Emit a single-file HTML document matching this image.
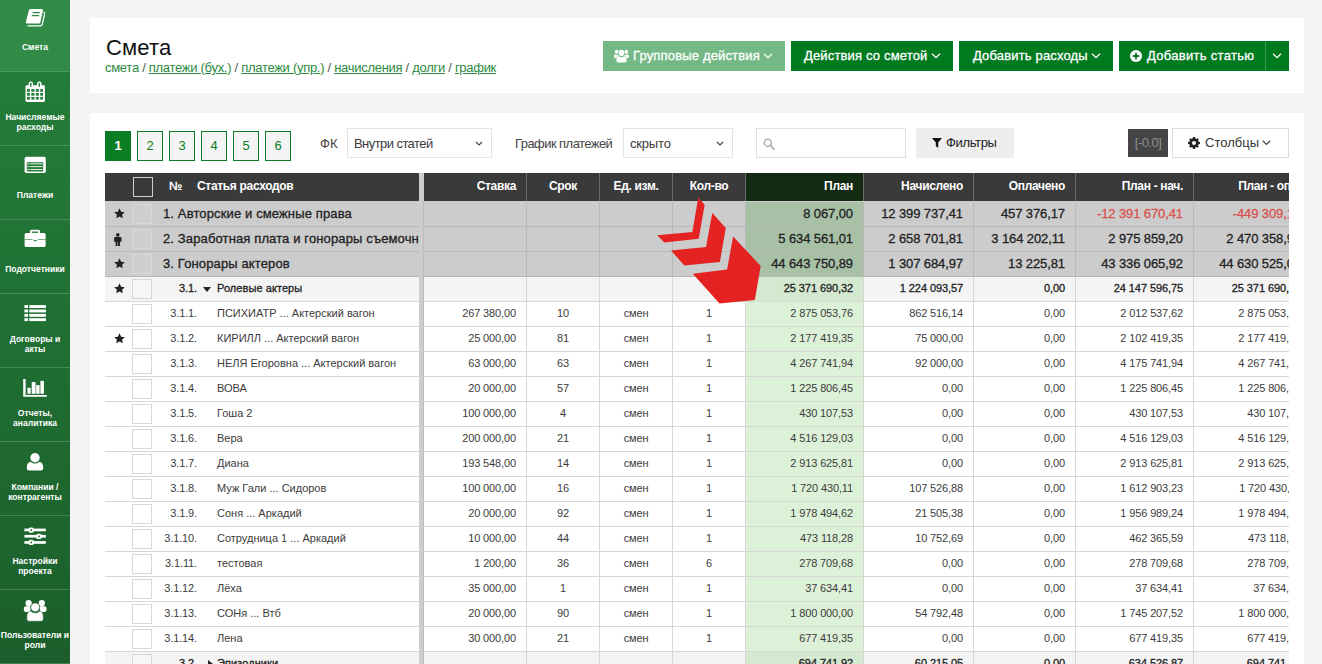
<!DOCTYPE html>
<html lang="ru"><head><meta charset="utf-8"><title>Смета</title>
<style>
*{box-sizing:border-box}
html,body{margin:0;padding:0}
body{width:1322px;height:664px;overflow:hidden;background:#f4f4f4;font-family:"Liberation Sans",sans-serif;color:#222;position:relative}
.abs{position:absolute}
/* sidebar */
#side{position:absolute;left:0;top:0;width:70px;height:664px;background:linear-gradient(#25803b,#1b5e2b);overflow:hidden}
.si{position:absolute;left:0;width:70px;height:74px;border-bottom:1px solid rgba(255,255,255,.18);color:#fff;text-align:center}
.si.act{background:#328a47;border-bottom-color:rgba(255,255,255,.13)}
.si svg{position:absolute;left:25px;top:9px;width:20px;height:20px;fill:#fff}
.si .t{position:absolute;left:-20px;width:110px;font-size:9.500px;line-height:9.500px;letter-spacing:0;white-space:nowrap;font-weight:bold;transform:scaleX(.9);transform-origin:55px 0}
/* header panel */
#head{position:absolute;left:90px;top:18px;width:1214px;height:75px;background:#fff}
#title{position:absolute;left:16px;top:17px;font-size:22px;letter-spacing:.15px;line-height:26px;color:#111;white-space:nowrap}
#crumbs{position:absolute;left:15px;top:42px;font-size:13px;line-height:16px;letter-spacing:-.29px;color:#2c8a40;white-space:nowrap}
#crumbs u{color:#2c8a40}
#crumbs i{font-style:normal;color:#555}
.btn{position:absolute;top:23px;height:30px;background:#007a1e;color:#fff;font-size:13px;line-height:30px;white-space:nowrap;letter-spacing:.16px;-webkit-text-stroke:.3px #fff}
.btn.dis{background:#74b985}
.btn span{position:absolute;top:0}
.btn svg{position:absolute}
/* main panel */
#main{position:absolute;left:90px;top:113px;width:1214px;height:560px;background:#fff}
.pg{position:absolute;top:18px;width:26px;height:30px;border:1px solid #0b7d24;background:#f4f4f4;color:#0b7d24;font-size:13px;line-height:28px;text-align:center}
.pg.on{background:#0b7d24;color:#fff;font-weight:bold}
.lbl{position:absolute;top:16px;height:30px;line-height:30px;font-size:13px;color:#444;white-space:nowrap}
.sel{position:absolute;top:15px;height:30px;border:1px solid #e2e4ea;background:#fff;font-size:13px;line-height:30px;color:#3a3a3a;padding-left:6px;white-space:nowrap}
.sel svg{position:absolute;right:8px;top:12px}
/* grid */
#lt{position:absolute;left:15px;top:60px;width:314px;height:500px;overflow:hidden;background:#ccc}
#sp{position:absolute;left:329px;top:60px;width:5px;height:500px;background:#cdcdcd;border-right:1px solid #bcbcbc}
#sph{position:absolute;left:329px;top:60px;width:5px;height:28px;background:#cecece}
#rt{position:absolute;left:334px;top:60px;width:865px;height:500px;overflow:hidden;background:#ccc}
.hr{position:absolute;left:0;top:0;height:28px;background:#3a3a3a;color:#fff;font-size:12px;font-weight:bold;line-height:27px;white-space:nowrap;letter-spacing:-.32px}
.r{position:absolute;left:0;height:25px;border-bottom:1px solid #d6d6d6;white-space:nowrap}
.r.g{background:#cccccc;border-bottom-color:#b9b9b9;font-size:13px;line-height:23px;color:#222;-webkit-text-stroke:.3px #222;letter-spacing:-.1px}
.r.g .nm{letter-spacing:.13px}
.r.s{background:#f4f4f4;font-size:11px;line-height:22px;color:#222;-webkit-text-stroke:.3px #222;letter-spacing:-.09px}
.r.s .nm{letter-spacing:.07px}
.r.i{background:#fff;font-size:11px;line-height:22px;color:#3c3c3c;letter-spacing:-.13px}
.r.i .nm{letter-spacing:0}
.c{position:absolute;top:0;height:100%;border-right:1px solid #d6d6d6;padding:0 10px;overflow:hidden}
.g .c{border-right-color:#b9b9b9}
.hr .c{border-right-color:#6a6a6a}
.ra{text-align:right}
.ca{text-align:center}
.red{color:#d9534f;-webkit-text-stroke-color:#d9534f}
.cb{position:absolute;left:27px;top:2px;width:20px;height:20px;border:1px solid #d8d8d8;background:#fff}
.g .cb{background:#cfcfcf;border-color:#d8d8d8}
.s .cb{background:#f6f6f6;border-color:#d6d6d6}
.ic{position:absolute;left:8.500px;top:6.300px;width:11px;height:11px}
.num{position:absolute;top:0;text-align:right}
.nm{position:absolute;top:0}
</style></head><body>
<div id="side">
<div class="si act" style="top:-2px">
<svg viewBox="0 0 20 20"><path d="M5.700 1.900H16.500a1.500 1.500 0 0 1 1.450 1.900L15.300 15.400a1.600 1.600 0 0 1-1.550 1.200H2.100a1.300 1.300 0 0 1-1.260-1.600L3.900 3.200A1.800 1.800 0 0 1 5.700 1.900z"/><path d="M19 5.400c.6.300.8.900.7 1.500L17.200 17.300a1.900 1.900 0 0 1-1.850 1.500H2.900" fill="none" stroke="#fff" stroke-width="1.300" stroke-linecap="round"/><path d="M7.700 5h7.300l-.3 1.300H7.400zM6.900 7.900h7.300l-.3 1.300H6.600z" fill="#328a47"/></svg>
<div class="t" style="top:44px">Смета</div>
</div>
<div class="si" style="top:72px">
<svg viewBox="0 0 20 20" style="overflow:visible"><path d="M1.700 4.200H18.700c.7 0 1.200.5 1.200 1.200V19.700c0 .7-.5 1.200-1.200 1.200H1.700c-.7 0-1.200-.5-1.200-1.200V5.400c0-.7.500-1.200 1.200-1.200z"/><rect x="3.600" y="0.500" width="4.400" height="6" rx="2"/><rect x="12.100" y="0.500" width="4.400" height="6" rx="2"/><g fill="#25803b"><rect x="5.100" y="1.800" width="1.400" height="4" rx=".5"/><rect x="13.600" y="1.800" width="1.400" height="4" rx=".5"/><rect x="2.0" y="8.1" width="3.0" height="2.7"/><rect x="2.0" y="12.0" width="3.0" height="2.7"/><rect x="2.0" y="15.9" width="3.0" height="2.7"/><rect x="6.3" y="8.1" width="3.2" height="2.7"/><rect x="6.3" y="12.0" width="3.2" height="2.7"/><rect x="6.3" y="15.9" width="3.2" height="2.7"/><rect x="10.8" y="8.1" width="3.0" height="2.7"/><rect x="10.8" y="12.0" width="3.0" height="2.7"/><rect x="10.8" y="15.9" width="3.0" height="2.7"/><rect x="15.2" y="8.1" width="2.8" height="2.7"/><rect x="15.2" y="12.0" width="2.8" height="2.7"/><rect x="15.2" y="15.9" width="2.8" height="2.7"/></g></svg>
<div class="t" style="top:40px">Начисляемые<br>расходы</div>
</div>
<div class="si" style="top:146px">
<svg viewBox="0 0 20 20" style="overflow:visible"><rect x="-.4" y="1.700" width="21.200" height="16.400" rx="1.800"/><rect x="1.800" y="7.200" width="16.400" height="9.300" fill="#267d3a"/><g fill="#e6f1e8"><rect x="2.400" y="8.300" width="15.200" height="1"/><rect x="2.400" y="11.100" width="15.200" height="1"/><rect x="2.400" y="14" width="15.200" height="1"/></g><rect x="4.500" y="7.600" width=".8" height="8.500" fill="#267d3a"/></svg>
<div class="t" style="top:44px">Платежи</div>
</div>
<div class="si" style="top:220px">
<svg viewBox="0 0 20 20" style="overflow:visible"><rect x="5" y=".8" width="10" height="6" rx="1.500"/><rect x="6.900" y="2.500" width="6.200" height="2" fill="#3d8c50"/><rect x="-.4" y="4" width="21" height="14" rx="1.600"/><rect x="-.4" y="10.100" width="21" height=".7" fill="#3d8c50"/><rect x="7.500" y="10" width="5.400" height="3.200"/><rect x="8.500" y="10.900" width="3.400" height="1.300" fill="#3d8c50"/></svg>
<div class="t" style="top:44px">Подотчетники</div>
</div>
<div class="si" style="top:294px">
<svg viewBox="0 0 20 20" style="overflow:visible"><rect x="-.6" y="2.1" width="3.700" height="2.900"/><rect x="4.300" y="2.1" width="16.600" height="2.900"/><rect x="-.6" y="6.5" width="3.700" height="2.900"/><rect x="4.300" y="6.5" width="16.600" height="2.900"/><rect x="-.6" y="10.9" width="3.700" height="2.900"/><rect x="4.300" y="10.9" width="16.600" height="2.900"/><rect x="-.6" y="15.2" width="3.700" height="2.900"/><rect x="4.300" y="15.2" width="16.600" height="2.900"/></svg>
<div class="t" style="top:40px">Договоры и<br>акты</div>
</div>
<div class="si" style="top:368px">
<svg viewBox="0 0 20 20" style="overflow:visible"><path d="M-1.800 2.100H.6V18H21.800v1.800H-1.800z"/><rect x="2.400" y="10.800" width="3.300" height="6"/><rect x="6.700" y="5.100" width="3.900" height="11.700"/><rect x="11.200" y="8.100" width="3.400" height="8.700"/><rect x="15.400" y="3.900" width="3.500" height="12.900"/></svg>
<div class="t" style="top:40px">Отчеты,<br>аналитика</div>
</div>
<div class="si" style="top:442px">
<svg viewBox="0 -.9 20 20" style="overflow:visible"><circle cx="10" cy="5.800" r="4.700"/><path d="M5.500 9.800c1.200 1.200 2.800 1.800 4.500 1.800s3.300-.6 4.500-1.800c2.300.5 3.700 2.600 3.700 5.400v1.200c0 1.300-1 2.300-2.300 2.300H4.100c-1.300 0-2.300-1-2.300-2.300v-1.200c0-2.800 1.400-4.900 3.700-5.400z"/></svg>
<div class="t" style="top:40px">Компании /<br>контрагенты</div>
</div>
<div class="si" style="top:516px">
<svg viewBox="0 0 20 20" style="overflow:visible"><rect x="-.6" y="3.600" width="21.400" height="2.700"/><rect x="-.6" y="9.900" width="21.400" height="2.700"/><rect x="-.6" y="16.100" width="21.400" height="2.700"/><rect x="3.600" y="2.400" width="5.200" height="5.300" rx="1.600"/><rect x="11.300" y="8.700" width="5.200" height="5.300" rx="1.600"/><rect x="3.600" y="14.800" width="5.200" height="5.300" rx="1.600"/><g fill="#1f6c31"><rect x="5.400" y="4.200" width="1.700" height="1.700" rx=".5"/><rect x="13.100" y="10.500" width="1.700" height="1.700" rx=".5"/><rect x="5.400" y="16.600" width="1.700" height="1.700" rx=".5"/></g></svg>
<div class="t" style="top:40px">Настройки<br>проекта</div>
</div>
<div class="si" style="top:590px">
<svg viewBox="0 0 20 20" style="overflow:visible"><circle cx="3.600" cy="4.200" r="3.100"/><circle cx="16.800" cy="4.200" r="3.100"/><path d="M.9 7.300H5.500V12.900H.7C-.4 12.900-1.100 12.200-1.100 11.100V9.500C-1.100 8.200-.3 7.300.9 7.300z"/><path d="M19.500 7.300H14.900V12.900h4.800c1.100 0 1.800-.7 1.800-1.800V9.500c0-1.300-.8-2.200-2-2.200z"/><g stroke="#1c632d" stroke-width=".6"><circle cx="10.200" cy="8.300" r="4.400"/><path d="M5.600 11.900c1.200 1.200 2.800 1.900 4.600 1.900s3.400-.7 4.600-1.900c2.200.6 3.500 2.600 3.500 5.200v2.800c0 1.400-1 2.400-2.400 2.400H4.200c-1.400 0-2.400-1-2.400-2.400v-2.800c0-2.600 1.400-4.600 3.800-5.200z"/></g></svg>
<div class="t" style="top:40px">Пользователи и<br>роли</div>
</div>
</div>
<div id="head">
<div id="title">Смета</div>
<div id="crumbs">смета <i>/</i> <u>платежи (бух.)</u> <i>/</i> <u>платежи (упр.)</u> <i>/</i> <u>начисления</u> <i>/</i> <u>долги</u> <i>/</i> <u>график</u></div>
<div class="btn dis" style="left:513px;width:182px"><svg width="15" height="13.500" viewBox="0 0 20 16" preserveAspectRatio="none" style="left:11px;top:8px" fill="#fff"><circle cx="10" cy="4.600" r="3.600"/><circle cx="3.600" cy="3.400" r="2.500"/><circle cx="16.400" cy="3.400" r="2.500"/><path d="M6.400 8.300c1 .9 2.200 1.400 3.600 1.400s2.600-.5 3.600-1.400c2 .3 3.100 2.200 3.100 4.400V14c0 1.200-.9 2-2.100 2H5.400c-1.200 0-2.100-.8-2.100-2v-1.300c0-2.200 1.100-4.100 3.100-4.400z"/><path d="M1.600 6.200c.6.500 1.300.8 2.100.8.700 0 1.400-.2 2-.6.100.5.300 1 .6 1.400-1.500.5-2.600 1.600-3.100 3.100H1.800C.8 10.900 0 10.200 0 9.300v-.6c0-1.300.6-2.300 1.600-2.500z"/><path d="M18.400 6.200c-.6.500-1.300.8-2.100.8-.7 0-1.400-.2-2-.6-.1.500-.3 1-.6 1.400 1.500.5 2.600 1.600 3.100 3.100h1.400c1 0 1.800-.7 1.800-1.600v-.6c0-1.300-.6-2.300-1.600-2.500z"/></svg><span id="b1" style="left:30px">Групповые действия</span><svg width="10" height="6" viewBox="0 0 10 6" style="left:160px;top:11.500px"><path d="M1 .8L5 4.600 9 .8" fill="none" stroke="#fff" stroke-width="1.300"/></svg></div>
<div class="btn" style="left:701px;width:162px"><span id="b2" style="left:13px">Действия со сметой</span><svg width="10" height="6" viewBox="0 0 10 6" style="left:140px;top:11.500px"><path d="M1 .8L5 4.600 9 .8" fill="none" stroke="#fff" stroke-width="1.300"/></svg></div>
<div class="btn" style="left:869px;width:154px"><span id="b3" style="left:14px">Добавить расходы</span><svg width="10" height="6" viewBox="0 0 10 6" style="left:132px;top:11.500px"><path d="M1 .8L5 4.600 9 .8" fill="none" stroke="#fff" stroke-width="1.300"/></svg></div>
<div class="btn" style="left:1029px;width:170px"><svg width="12" height="12" viewBox="0 0 12 12" style="left:11px;top:9px"><circle cx="6" cy="6" r="6" fill="#fff"/><path d="M6 2.800v6.400M2.800 6h6.400" stroke="#007a1e" stroke-width="1.800"/></svg><span id="b4" style="left:28px;letter-spacing:.3px">Добавить статью</span><div class="abs" style="left:146px;top:0;width:1px;height:30px;background:#3a9a52"></div><svg width="10" height="6" viewBox="0 0 10 6" style="left:153px;top:11.500px"><path d="M1 .8L5 4.600 9 .8" fill="none" stroke="#fff" stroke-width="1.300"/></svg></div>
</div>
<div id="main">
<div class="pg on" style="left:15px">1</div>
<div class="pg" style="left:47px">2</div>
<div class="pg" style="left:79px">3</div>
<div class="pg" style="left:111px">4</div>
<div class="pg" style="left:143px">5</div>
<div class="pg" style="left:175px">6</div>
<div class="lbl" id="l1" style="left:230px">ФК</div>
<div class="sel" style="left:257px;width:145px"><span id="s1" style="letter-spacing:-0.566px">Внутри статей</span><svg width="8" height="6" viewBox="0 0 8 6"><path d="M1 1l3 3 3-3" fill="none" stroke="#444" stroke-width="1.100"/></svg></div>
<div class="lbl" id="l2" style="left:425px;letter-spacing:-0.558px">График платежей</div>
<div class="sel" style="left:533px;width:110px"><span id="s2" style="letter-spacing:-0.183px">скрыто</span><svg width="8" height="6" viewBox="0 0 8 6"><path d="M1 1l3 3 3-3" fill="none" stroke="#444" stroke-width="1.100"/></svg></div>
<div class="abs" style="left:666px;top:15px;width:150px;height:30px;border:1px solid #dcdfe6;background:#fff"><svg class="abs" style="left:6px;top:9px" width="12" height="12" viewBox="0 0 13 13"><circle cx="5.200" cy="5.200" r="3.900" fill="none" stroke="#b0b0b0" stroke-width="1.600"/><path d="M8 8l4 4" stroke="#b0b0b0" stroke-width="2" stroke-linecap="round"/></svg></div>
<div class="abs" style="left:826px;top:15px;width:98px;height:30px;background:#eeeeee;font-size:13px;line-height:30px;color:#222"><svg class="abs" style="left:16px;top:10px" width="10" height="10" viewBox="0 0 10 10"><path d="M0 0h10L6.200 4.600V10L3.800 8V4.600z" fill="#111"/></svg><span class="abs" id="f1" style="left:30px;top:0;letter-spacing:-0.36px">Фильтры</span></div>
<div class="abs" style="left:1038px;top:16px;width:40px;height:28px;background:#444;color:#8f8f8f;font-size:13px;line-height:28px;text-align:center;letter-spacing:-.5px">[-0.0]</div>
<div class="abs" style="left:1082px;top:15px;width:117px;height:30px;border:1px solid #ddd;background:#fff;font-size:13px;line-height:28px;color:#333"><svg class="abs" style="left:15px;top:8px" width="12" height="12" viewBox="0 0 12 12"><path d="M6 0l1 .1.400 1.500.9.400L9.600 1.200l1.200 1.200-.8 1.300.4.900 1.500.4.100 1-.1 1-1.500.4-.4.900.8 1.300-1.200 1.200-1.300-.8-.9.400L7 11.900 6 12l-1-.1-.4-1.500-.9-.4-1.300.8L1.200 9.600 2 8.300l-.4-.9L.1 7 0 6l.1-1 1.500-.4.400-.9L1.200 2.400 2.400 1.200l1.300.8.900-.4L5 .1z" fill="#222"/><circle cx="6" cy="6" r="2" fill="#fff"/></svg><span class="abs" id="c1" style="left:32px;top:0;letter-spacing:0.034px">Столбцы</span><svg class="abs" style="left:89px;top:11px" width="9" height="6" viewBox="0 0 9 6"><path d="M.8 .8l3.700 3.600L8.200 .8" fill="none" stroke="#444" stroke-width="1.200"/></svg></div>
<div id="lt">
<div class="hr" style="width:314px"><div class="abs" style="left:28px;top:4px;width:20px;height:20px;border:1px solid #d0d0d0"></div><span class="abs" id="h0" style="left:64px">№</span><span class="abs" id="h1" style="left:92px">Статья расходов</span></div>
<div class="r g" style="top:29px;width:314px">
<svg class="ic" viewBox="0 0 12 12"><path d="M6 .3l1.750 3.700 4 .5-2.950 2.800.75 4L6 9.350 2.450 11.300l.75-4L.25 4.500l4-.5z" fill="#222"/></svg>
<div class="cb"></div>
<span class="nm" style="left:58px">1. Авторские и смежные права</span>
</div>
<div class="r g" style="top:54px;width:314px">
<svg class="ic" viewBox="0 0 8 14" style="left:9px;top:5.500px;width:7.600px;height:13.300px"><circle cx="4" cy="2" r="1.900" fill="#222"/><path d="M1.300 4.300h5.400c.7 0 1.200.5 1.200 1.200v3.700H6.300V14H4.300V9.600h-.6V14H1.700V9.200H.1V5.500c0-.7.500-1.200 1.200-1.200z" fill="#222"/></svg>
<div class="cb"></div>
<span class="nm" style="left:58px">2. Заработная плата и гонорары съемочной группы</span>
</div>
<div class="r g" style="top:79px;width:314px">
<svg class="ic" viewBox="0 0 12 12"><path d="M6 .3l1.750 3.700 4 .5-2.950 2.800.75 4L6 9.350 2.450 11.300l.75-4L.25 4.500l4-.5z" fill="#222"/></svg>
<div class="cb"></div>
<span class="nm" style="left:58px">3. Гонорары актеров</span>
</div>
<div class="r s" style="top:104px;width:314px">
<svg class="ic" viewBox="0 0 12 12"><path d="M6 .3l1.750 3.700 4 .5-2.950 2.800.75 4L6 9.350 2.450 11.300l.75-4L.25 4.500l4-.5z" fill="#222"/></svg>
<div class="cb"></div>
<span class="num" style="left:42px;width:50px">3.1.</span><svg class="abs" style="left:98px;top:10px" width="8" height="5" viewBox="0 0 8 5"><path d="M0 0h8L4 5z" fill="#222"/></svg><span class="nm" style="left:112px">Ролевые актеры</span>
</div>
<div class="r i" style="top:129px;width:314px">
<div class="cb"></div>
<span class="num" style="left:42px;width:50px">3.1.1.</span><span class="nm" style="left:112px">ПСИХИАТР ... Актерский вагон</span>
</div>
<div class="r i" style="top:154px;width:314px">
<svg class="ic" viewBox="0 0 12 12"><path d="M6 .3l1.750 3.700 4 .5-2.950 2.800.75 4L6 9.350 2.450 11.300l.75-4L.25 4.500l4-.5z" fill="#222"/></svg>
<div class="cb"></div>
<span class="num" style="left:42px;width:50px">3.1.2.</span><span class="nm" style="left:112px">КИРИЛЛ ... Актерский вагон</span>
</div>
<div class="r i" style="top:179px;width:314px">
<div class="cb"></div>
<span class="num" style="left:42px;width:50px">3.1.3.</span><span class="nm" style="left:112px">НЕЛЯ Егоровна ... Актерский вагон</span>
</div>
<div class="r i" style="top:204px;width:314px">
<div class="cb"></div>
<span class="num" style="left:42px;width:50px">3.1.4.</span><span class="nm" style="left:112px">ВОВА</span>
</div>
<div class="r i" style="top:229px;width:314px">
<div class="cb"></div>
<span class="num" style="left:42px;width:50px">3.1.5.</span><span class="nm" style="left:112px">Гоша 2</span>
</div>
<div class="r i" style="top:254px;width:314px">
<div class="cb"></div>
<span class="num" style="left:42px;width:50px">3.1.6.</span><span class="nm" style="left:112px">Вера</span>
</div>
<div class="r i" style="top:279px;width:314px">
<div class="cb"></div>
<span class="num" style="left:42px;width:50px">3.1.7.</span><span class="nm" style="left:112px">Диана</span>
</div>
<div class="r i" style="top:304px;width:314px">
<div class="cb"></div>
<span class="num" style="left:42px;width:50px">3.1.8.</span><span class="nm" style="left:112px">Муж Гали ... Сидоров</span>
</div>
<div class="r i" style="top:329px;width:314px">
<div class="cb"></div>
<span class="num" style="left:42px;width:50px">3.1.9.</span><span class="nm" style="left:112px">Соня ... Аркадий</span>
</div>
<div class="r i" style="top:354px;width:314px">
<div class="cb"></div>
<span class="num" style="left:42px;width:50px">3.1.10.</span><span class="nm" style="left:112px">Сотрудница 1 ... Аркадий</span>
</div>
<div class="r i" style="top:379px;width:314px">
<div class="cb"></div>
<span class="num" style="left:42px;width:50px">3.1.11.</span><span class="nm" style="left:112px">тестовая</span>
</div>
<div class="r i" style="top:404px;width:314px">
<div class="cb"></div>
<span class="num" style="left:42px;width:50px">3.1.12.</span><span class="nm" style="left:112px">Лёха</span>
</div>
<div class="r i" style="top:429px;width:314px">
<div class="cb"></div>
<span class="num" style="left:42px;width:50px">3.1.13.</span><span class="nm" style="left:112px">СОНя ... Втб</span>
</div>
<div class="r i" style="top:454px;width:314px">
<div class="cb"></div>
<span class="num" style="left:42px;width:50px">3.1.14.</span><span class="nm" style="left:112px">Лена</span>
</div>
<div class="r s" style="top:479px;width:314px">
<div class="cb"></div>
<span class="num" style="left:42px;width:50px">3.2.</span><svg class="abs" style="left:103px;top:8px" width="5" height="8" viewBox="0 0 5 8"><path d="M0 0v8l5-4z" fill="#222"/></svg><span class="nm" style="left:112px">Эпизодники</span>
</div>
</div>
<div id="sp"></div><div id="sph"></div>
<div id="rt">
<div class="hr" style="width:888px">
<div class="c ra" style="left:0px;width:103px">Ставка</div>
<div class="c ca" style="left:103px;width:73px">Срок</div>
<div class="c ca" style="left:176px;width:73px">Ед. изм.</div>
<div class="c ca" style="left:249px;width:73px">Кол-во</div>
<div class="c ra" style="left:322px;width:118px;background:#142b13">План</div>
<div class="c ra" style="left:440px;width:110px">Начислено</div>
<div class="c ra" style="left:550px;width:102px">Оплачено</div>
<div class="c ra" style="left:652px;width:118px">План - нач.</div>
<div class="c ra" style="left:770px;width:118px">План - опл.</div>
</div>
<div class="r g" style="top:29px;width:888px">
<div class="c ra" style="left:0px;width:103px"></div>
<div class="c ca" style="left:103px;width:73px"></div>
<div class="c ca" style="left:176px;width:73px"></div>
<div class="c ca" style="left:249px;width:73px"></div>
<div class="c ra" style="left:322px;width:118px;background:#a7c0a6">8 067,00</div>
<div class="c ra" style="left:440px;width:110px">12 399 737,41</div>
<div class="c ra" style="left:550px;width:102px">457 376,17</div>
<div class="c ra red" style="left:652px;width:118px">-12 391 670,41</div>
<div class="c ra red" style="left:770px;width:118px">-449 309,17</div>
</div>
<div class="r g" style="top:54px;width:888px">
<div class="c ra" style="left:0px;width:103px"></div>
<div class="c ca" style="left:103px;width:73px"></div>
<div class="c ca" style="left:176px;width:73px"></div>
<div class="c ca" style="left:249px;width:73px"></div>
<div class="c ra" style="left:322px;width:118px;background:#a7c0a6">5 634 561,01</div>
<div class="c ra" style="left:440px;width:110px">2 658 701,81</div>
<div class="c ra" style="left:550px;width:102px">3 164 202,11</div>
<div class="c ra" style="left:652px;width:118px">2 975 859,20</div>
<div class="c ra" style="left:770px;width:118px">2 470 358,90</div>
</div>
<div class="r g" style="top:79px;width:888px">
<div class="c ra" style="left:0px;width:103px"></div>
<div class="c ca" style="left:103px;width:73px"></div>
<div class="c ca" style="left:176px;width:73px"></div>
<div class="c ca" style="left:249px;width:73px"></div>
<div class="c ra" style="left:322px;width:118px;background:#a7c0a6">44 643 750,89</div>
<div class="c ra" style="left:440px;width:110px">1 307 684,97</div>
<div class="c ra" style="left:550px;width:102px">13 225,81</div>
<div class="c ra" style="left:652px;width:118px">43 336 065,92</div>
<div class="c ra" style="left:770px;width:118px">44 630 525,08</div>
</div>
<div class="r s" style="top:104px;width:888px">
<div class="c ra" style="left:0px;width:103px"></div>
<div class="c ca" style="left:103px;width:73px"></div>
<div class="c ca" style="left:176px;width:73px"></div>
<div class="c ca" style="left:249px;width:73px"></div>
<div class="c ra" style="left:322px;width:118px;background:#d5e9d1">25 371 690,32</div>
<div class="c ra" style="left:440px;width:110px">1 224 093,57</div>
<div class="c ra" style="left:550px;width:102px">0,00</div>
<div class="c ra" style="left:652px;width:118px">24 147 596,75</div>
<div class="c ra" style="left:770px;width:118px">25 371 690,32</div>
</div>
<div class="r i" style="top:129px;width:888px">
<div class="c ra" style="left:0px;width:103px">267 380,00</div>
<div class="c ca" style="left:103px;width:73px">10</div>
<div class="c ca" style="left:176px;width:73px">смен</div>
<div class="c ca" style="left:249px;width:73px">1</div>
<div class="c ra" style="left:322px;width:118px;background:#dcf1d8">2 875 053,76</div>
<div class="c ra" style="left:440px;width:110px">862 516,14</div>
<div class="c ra" style="left:550px;width:102px">0,00</div>
<div class="c ra" style="left:652px;width:118px">2 012 537,62</div>
<div class="c ra" style="left:770px;width:118px">2 875 053,76</div>
</div>
<div class="r i" style="top:154px;width:888px">
<div class="c ra" style="left:0px;width:103px">25 000,00</div>
<div class="c ca" style="left:103px;width:73px">81</div>
<div class="c ca" style="left:176px;width:73px">смен</div>
<div class="c ca" style="left:249px;width:73px">1</div>
<div class="c ra" style="left:322px;width:118px;background:#dcf1d8">2 177 419,35</div>
<div class="c ra" style="left:440px;width:110px">75 000,00</div>
<div class="c ra" style="left:550px;width:102px">0,00</div>
<div class="c ra" style="left:652px;width:118px">2 102 419,35</div>
<div class="c ra" style="left:770px;width:118px">2 177 419,35</div>
</div>
<div class="r i" style="top:179px;width:888px">
<div class="c ra" style="left:0px;width:103px">63 000,00</div>
<div class="c ca" style="left:103px;width:73px">63</div>
<div class="c ca" style="left:176px;width:73px">смен</div>
<div class="c ca" style="left:249px;width:73px">1</div>
<div class="c ra" style="left:322px;width:118px;background:#dcf1d8">4 267 741,94</div>
<div class="c ra" style="left:440px;width:110px">92 000,00</div>
<div class="c ra" style="left:550px;width:102px">0,00</div>
<div class="c ra" style="left:652px;width:118px">4 175 741,94</div>
<div class="c ra" style="left:770px;width:118px">4 267 741,94</div>
</div>
<div class="r i" style="top:204px;width:888px">
<div class="c ra" style="left:0px;width:103px">20 000,00</div>
<div class="c ca" style="left:103px;width:73px">57</div>
<div class="c ca" style="left:176px;width:73px">смен</div>
<div class="c ca" style="left:249px;width:73px">1</div>
<div class="c ra" style="left:322px;width:118px;background:#dcf1d8">1 225 806,45</div>
<div class="c ra" style="left:440px;width:110px">0,00</div>
<div class="c ra" style="left:550px;width:102px">0,00</div>
<div class="c ra" style="left:652px;width:118px">1 225 806,45</div>
<div class="c ra" style="left:770px;width:118px">1 225 806,45</div>
</div>
<div class="r i" style="top:229px;width:888px">
<div class="c ra" style="left:0px;width:103px">100 000,00</div>
<div class="c ca" style="left:103px;width:73px">4</div>
<div class="c ca" style="left:176px;width:73px">смен</div>
<div class="c ca" style="left:249px;width:73px">1</div>
<div class="c ra" style="left:322px;width:118px;background:#dcf1d8">430 107,53</div>
<div class="c ra" style="left:440px;width:110px">0,00</div>
<div class="c ra" style="left:550px;width:102px">0,00</div>
<div class="c ra" style="left:652px;width:118px">430 107,53</div>
<div class="c ra" style="left:770px;width:118px">430 107,53</div>
</div>
<div class="r i" style="top:254px;width:888px">
<div class="c ra" style="left:0px;width:103px">200 000,00</div>
<div class="c ca" style="left:103px;width:73px">21</div>
<div class="c ca" style="left:176px;width:73px">смен</div>
<div class="c ca" style="left:249px;width:73px">1</div>
<div class="c ra" style="left:322px;width:118px;background:#dcf1d8">4 516 129,03</div>
<div class="c ra" style="left:440px;width:110px">0,00</div>
<div class="c ra" style="left:550px;width:102px">0,00</div>
<div class="c ra" style="left:652px;width:118px">4 516 129,03</div>
<div class="c ra" style="left:770px;width:118px">4 516 129,03</div>
</div>
<div class="r i" style="top:279px;width:888px">
<div class="c ra" style="left:0px;width:103px">193 548,00</div>
<div class="c ca" style="left:103px;width:73px">14</div>
<div class="c ca" style="left:176px;width:73px">смен</div>
<div class="c ca" style="left:249px;width:73px">1</div>
<div class="c ra" style="left:322px;width:118px;background:#dcf1d8">2 913 625,81</div>
<div class="c ra" style="left:440px;width:110px">0,00</div>
<div class="c ra" style="left:550px;width:102px">0,00</div>
<div class="c ra" style="left:652px;width:118px">2 913 625,81</div>
<div class="c ra" style="left:770px;width:118px">2 913 625,81</div>
</div>
<div class="r i" style="top:304px;width:888px">
<div class="c ra" style="left:0px;width:103px">100 000,00</div>
<div class="c ca" style="left:103px;width:73px">16</div>
<div class="c ca" style="left:176px;width:73px">смен</div>
<div class="c ca" style="left:249px;width:73px">1</div>
<div class="c ra" style="left:322px;width:118px;background:#dcf1d8">1 720 430,11</div>
<div class="c ra" style="left:440px;width:110px">107 526,88</div>
<div class="c ra" style="left:550px;width:102px">0,00</div>
<div class="c ra" style="left:652px;width:118px">1 612 903,23</div>
<div class="c ra" style="left:770px;width:118px">1 720 430,11</div>
</div>
<div class="r i" style="top:329px;width:888px">
<div class="c ra" style="left:0px;width:103px">20 000,00</div>
<div class="c ca" style="left:103px;width:73px">92</div>
<div class="c ca" style="left:176px;width:73px">смен</div>
<div class="c ca" style="left:249px;width:73px">1</div>
<div class="c ra" style="left:322px;width:118px;background:#dcf1d8">1 978 494,62</div>
<div class="c ra" style="left:440px;width:110px">21 505,38</div>
<div class="c ra" style="left:550px;width:102px">0,00</div>
<div class="c ra" style="left:652px;width:118px">1 956 989,24</div>
<div class="c ra" style="left:770px;width:118px">1 978 494,62</div>
</div>
<div class="r i" style="top:354px;width:888px">
<div class="c ra" style="left:0px;width:103px">10 000,00</div>
<div class="c ca" style="left:103px;width:73px">44</div>
<div class="c ca" style="left:176px;width:73px">смен</div>
<div class="c ca" style="left:249px;width:73px">1</div>
<div class="c ra" style="left:322px;width:118px;background:#dcf1d8">473 118,28</div>
<div class="c ra" style="left:440px;width:110px">10 752,69</div>
<div class="c ra" style="left:550px;width:102px">0,00</div>
<div class="c ra" style="left:652px;width:118px">462 365,59</div>
<div class="c ra" style="left:770px;width:118px">473 118,28</div>
</div>
<div class="r i" style="top:379px;width:888px">
<div class="c ra" style="left:0px;width:103px">1 200,00</div>
<div class="c ca" style="left:103px;width:73px">36</div>
<div class="c ca" style="left:176px;width:73px">смен</div>
<div class="c ca" style="left:249px;width:73px">6</div>
<div class="c ra" style="left:322px;width:118px;background:#dcf1d8">278 709,68</div>
<div class="c ra" style="left:440px;width:110px">0,00</div>
<div class="c ra" style="left:550px;width:102px">0,00</div>
<div class="c ra" style="left:652px;width:118px">278 709,68</div>
<div class="c ra" style="left:770px;width:118px">278 709,68</div>
</div>
<div class="r i" style="top:404px;width:888px">
<div class="c ra" style="left:0px;width:103px">35 000,00</div>
<div class="c ca" style="left:103px;width:73px">1</div>
<div class="c ca" style="left:176px;width:73px">смен</div>
<div class="c ca" style="left:249px;width:73px">1</div>
<div class="c ra" style="left:322px;width:118px;background:#dcf1d8">37 634,41</div>
<div class="c ra" style="left:440px;width:110px">0,00</div>
<div class="c ra" style="left:550px;width:102px">0,00</div>
<div class="c ra" style="left:652px;width:118px">37 634,41</div>
<div class="c ra" style="left:770px;width:118px">37 634,41</div>
</div>
<div class="r i" style="top:429px;width:888px">
<div class="c ra" style="left:0px;width:103px">20 000,00</div>
<div class="c ca" style="left:103px;width:73px">90</div>
<div class="c ca" style="left:176px;width:73px">смен</div>
<div class="c ca" style="left:249px;width:73px">1</div>
<div class="c ra" style="left:322px;width:118px;background:#dcf1d8">1 800 000,00</div>
<div class="c ra" style="left:440px;width:110px">54 792,48</div>
<div class="c ra" style="left:550px;width:102px">0,00</div>
<div class="c ra" style="left:652px;width:118px">1 745 207,52</div>
<div class="c ra" style="left:770px;width:118px">1 800 000,00</div>
</div>
<div class="r i" style="top:454px;width:888px">
<div class="c ra" style="left:0px;width:103px">30 000,00</div>
<div class="c ca" style="left:103px;width:73px">21</div>
<div class="c ca" style="left:176px;width:73px">смен</div>
<div class="c ca" style="left:249px;width:73px">1</div>
<div class="c ra" style="left:322px;width:118px;background:#dcf1d8">677 419,35</div>
<div class="c ra" style="left:440px;width:110px">0,00</div>
<div class="c ra" style="left:550px;width:102px">0,00</div>
<div class="c ra" style="left:652px;width:118px">677 419,35</div>
<div class="c ra" style="left:770px;width:118px">677 419,35</div>
</div>
<div class="r s" style="top:479px;width:888px">
<div class="c ra" style="left:0px;width:103px"></div>
<div class="c ca" style="left:103px;width:73px"></div>
<div class="c ca" style="left:176px;width:73px"></div>
<div class="c ca" style="left:249px;width:73px"></div>
<div class="c ra" style="left:322px;width:118px;background:#d5e9d1">694 741,92</div>
<div class="c ra" style="left:440px;width:110px">60 215,05</div>
<div class="c ra" style="left:550px;width:102px">0,00</div>
<div class="c ra" style="left:652px;width:118px">634 526,87</div>
<div class="c ra" style="left:770px;width:118px">694 741,92</div>
</div>
</div>
<svg class="abs" style="left:-90px;top:-113px" width="1322" height="664" viewBox="0 0 1322 664">
<polygon points="698.2,197.8 704.7,204.8 698.7,238.8 664.4,242.4 657.2,235.2 692.4,231.9" fill="#e52222"/>
<polygon points="712.3,213.1 725.8,228.0 719.9,261.9 684.3,265.5 671.1,250.5 706.0,246.9" fill="#e52222"/>
<polygon points="733.1,236.6 760.7,265.9 754.8,299.9 719.5,303.5 692.8,273.7 727.1,269.5" fill="#e52222"/>
</svg>
</div>
</body></html>
